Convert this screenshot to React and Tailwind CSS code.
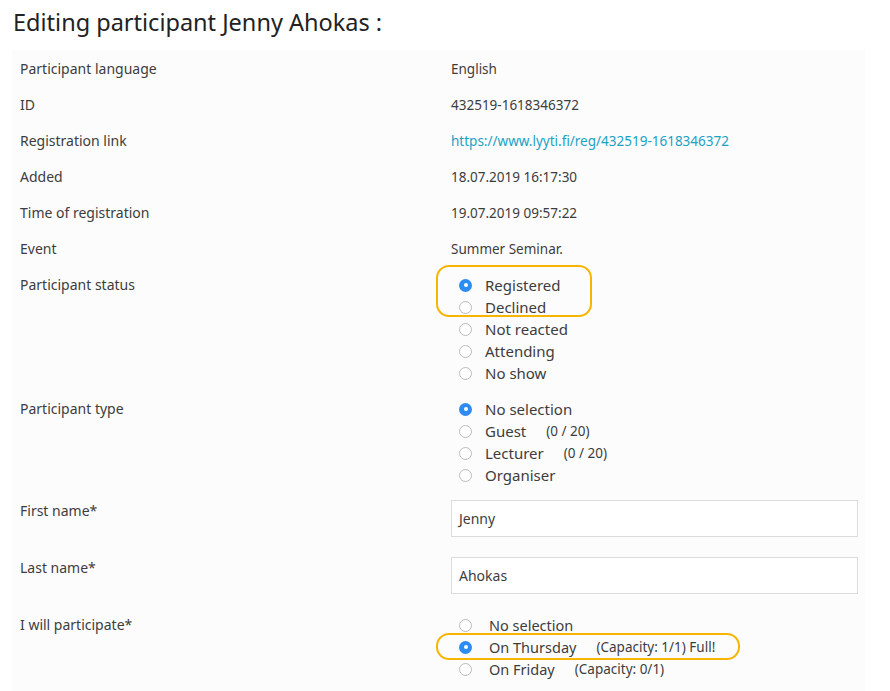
import React from "react";

const FONT = { fontFamily: '"Noto Sans", "Open Sans", sans-serif' };

function Radio({ checked }) {
  return checked ? (
    <span className="flex h-[13px] w-[13px] shrink-0 items-center justify-center rounded-full bg-[#2d8cf0]">
      <span className="block h-[4px] w-[4px] rounded-full bg-white" />
    </span>
  ) : (
    <span className="block h-[13px] w-[13px] shrink-0 rounded-full border border-[#bcbcbc] bg-white" />
  );
}

function Option({ label, checked, note, wide }) {
  return (
    <div className="flex h-[22px] items-center">
      <span className="ml-[8px] block">
        <Radio checked={checked} />
      </span>
      <span className={wide ? "ml-[17px]" : "ml-[13px]"}>{label}</span>
      {note && <span className="ml-[20px] text-[13.5px]">{note}</span>}
    </div>
  );
}

function Row({ label, children }) {
  return (
    <div className="grid grid-cols-[439px_1fr] py-[7px] leading-[22px]">
      <div className="pl-[8px]">{label}</div>
      <div className="pr-[7px] text-[13.5px]">{children}</div>
    </div>
  );
}

function Field({ value }) {
  return (
    <div className="mb-[6px] flex h-[37px] items-center border border-[#dcdcdc] bg-white px-[7px] text-[14px]">
      {value}
    </div>
  );
}

export default function App() {
  return (
    <div className="min-h-[691px] bg-white text-[14px] text-[#3d3d3d]" style={FONT}>
      <h1 className="pl-[13px] pt-[6px] text-[23.5px] leading-[32px] text-[#222]">
        Editing participant Jenny Ahokas :
      </h1>
      <div className="ml-[12px] mt-[12px] w-[853px] bg-[#fcfcfc] pb-[10px] pt-px">
        <Row label="Participant language">English</Row>
        <Row label="ID">432519-1618346372</Row>
        <Row label="Registration link">
          <a className="text-[#1aa2c6]" href="#">https://www.lyyti.fi/reg/432519-1618346372</a>
        </Row>
        <Row label="Added">18.07.2019 16:17:30</Row>
        <Row label="Time of registration">19.07.2019 09:57:22</Row>
        <Row label="Event">Summer Seminar.</Row>
        <Row label="Participant status">
          <div className="relative">
            <div className="absolute left-[-15px] top-[-9px] h-[52px] w-[156px] rounded-[13px] border-[2.5px] border-[#f7b500]" />
            <div className="text-[15px] leading-[21px]">
              <Option label="Registered" checked />
              <Option label="Declined" />
              <Option label="Not reacted" />
              <Option label="Attending" />
              <Option label="No show" />
            </div>
          </div>
        </Row>
        <Row label="Participant type">
          <div className="text-[15px] leading-[21px]">
            <Option label="No selection" checked />
            <Option label="Guest" note="(0 / 20)" />
            <Option label="Lecturer" note="(0 / 20)" />
            <Option label="Organiser" />
          </div>
        </Row>
        <Row label="First name*">
          <Field value="Jenny" />
        </Row>
        <Row label="Last name*">
          <Field value="Ahokas" />
        </Row>
        <Row label="I will participate*">
          <div className="text-[14.5px] leading-[21px]">
            <Option label="No selection" wide />
            <div className="relative">
              <div className="absolute left-[-15px] top-[-3px] h-[27px] w-[304px] rounded-[13px] border-[2.5px] border-[#f7b500]" />
              <Option label="On Thursday" checked wide note="(Capacity: 1/1) Full!" />
            </div>
            <Option label="On Friday" wide note="(Capacity: 0/1)" />
          </div>
        </Row>
      </div>
    </div>
  );
}
